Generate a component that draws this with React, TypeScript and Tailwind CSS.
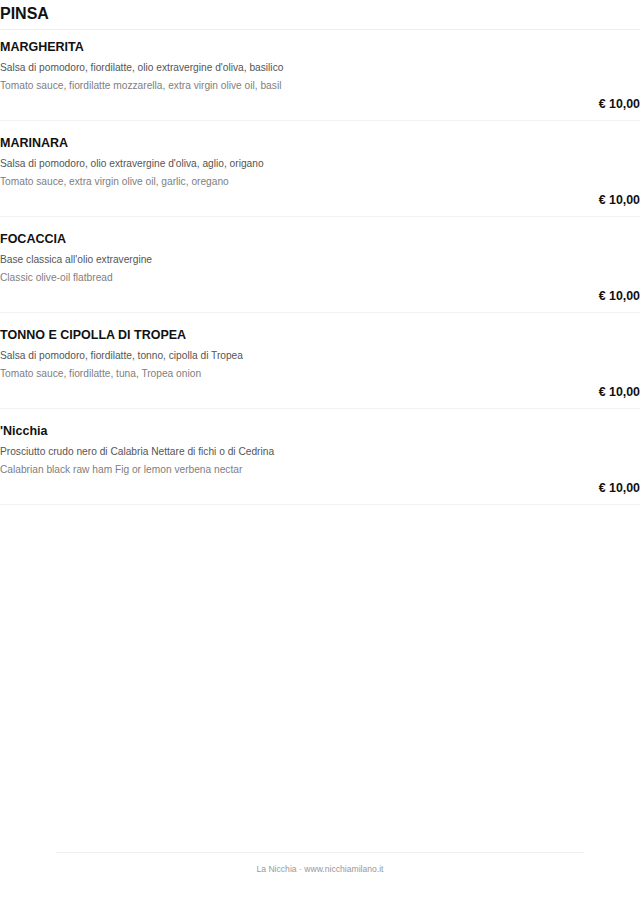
import React from "react";

const items = [
  {
    name: "MARGHERITA",
    it: "Salsa di pomodoro, fiordilatte, olio extravergine d'oliva, basilico",
    en: "Tomato sauce, fiordilatte mozzarella, extra virgin olive oil, basil",
  },
  {
    name: "MARINARA",
    it: "Salsa di pomodoro, olio extravergine d'oliva, aglio, origano",
    en: "Tomato sauce, extra virgin olive oil, garlic, oregano",
  },
  {
    name: "FOCACCIA",
    it: "Base classica all'olio extravergine",
    en: "Classic olive-oil flatbread",
  },
  {
    name: "TONNO E CIPOLLA DI TROPEA",
    it: "Salsa di pomodoro, fiordilatte, tonno, cipolla di Tropea",
    en: "Tomato sauce, fiordilatte, tuna, Tropea onion",
  },
  {
    name: "'Nicchia",
    it: "Prosciutto crudo nero di Calabria Nettare di fichi o di Cedrina",
    en: "Calabrian black raw ham Fig or lemon verbena nectar",
  },
];

export default function App() {
  return (
    <div
      className="w-[640px] h-[905px] bg-white flex flex-col"
      style={{ fontFamily: '"Liberation Sans", Arial, sans-serif' }}
    >
      <div className="pt-1 pb-[5px] border-b border-[#eeeeee]">
        <h1 className="text-[16px] leading-[20px] font-bold text-[#111111]">PINSA</h1>
      </div>
      <div className="flex flex-col">
        {items.map((item, i) => (
          <div
            key={item.name}
            className={`${i === 0 ? "pt-[7px]" : "pt-3"} pb-[7px] border-b border-[#f2f2f2] flex flex-col`}
          >
            <div className="text-[12.5px] leading-[20px] font-bold text-[#111111]">{item.name}</div>
            <div className="mt-[2px] text-[10.2px] leading-[18px] text-[#555555]">{item.it}</div>
            <div className="text-[10.2px] leading-[18px] text-[#808080]">{item.en}</div>
            <div className="text-[12.4px] leading-[18px] font-bold text-[#111111] text-right">€ 10,00</div>
          </div>
        ))}
      </div>
      <div className="flex-1" />
      <div className="mx-[56px] border-t border-[#eeeeee] pt-[11px] pb-[31px] text-center text-[8.6px] leading-[10px] text-[#999999]">
        La Nicchia · www.nicchiamilano.it
      </div>
    </div>
  );
}
